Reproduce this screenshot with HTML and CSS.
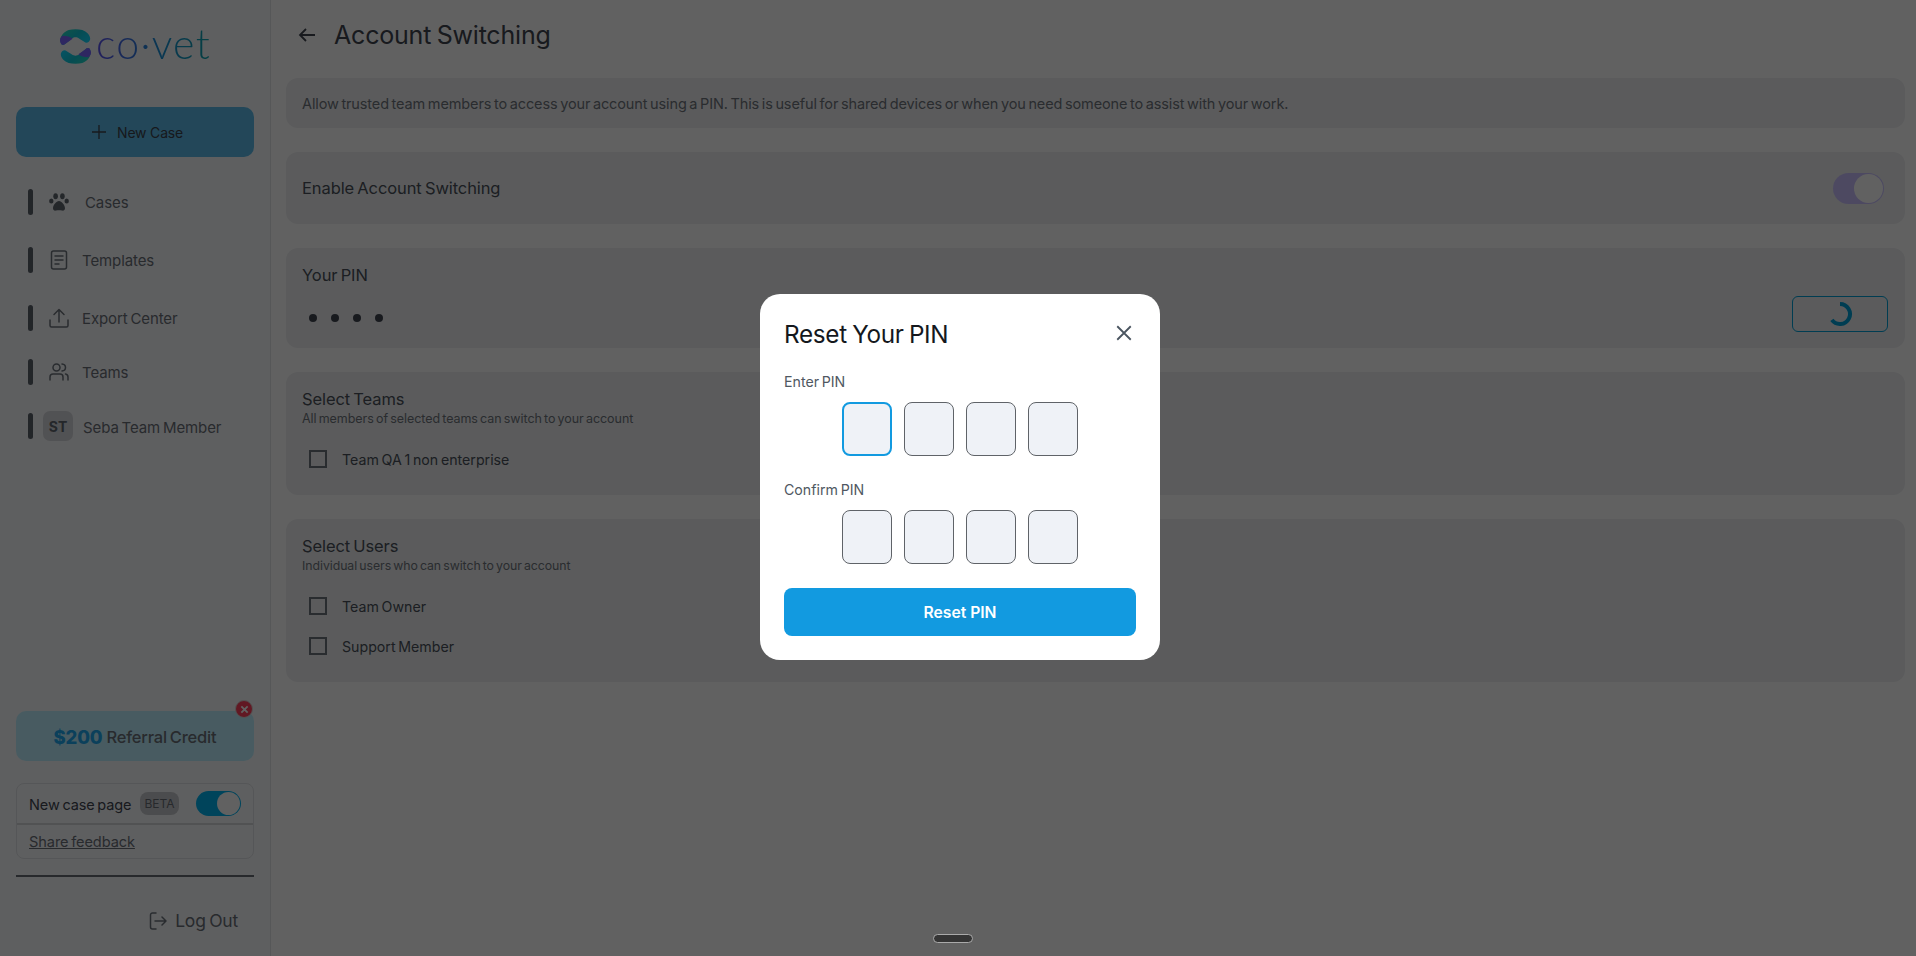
FILE: index.html
```html
<!DOCTYPE html>
<html lang="en">
<head>
    <meta charset="UTF-8">
    <meta name="viewport" content="width=device-width, initial-scale=1.0">
    <title>Account Switching</title>
    <link rel="stylesheet" href="styles.css">
</head>
<body>
    <aside class="sidebar">
        <div class="logo">
            <svg class="logo-mark" viewBox="0 0 32 36">
                <defs>
                    <linearGradient id="logoGrad" x1="0" y1="0" x2="1" y2="0.6">
                        <stop offset="0" stop-color="#2fe0c0"/>
                        <stop offset="0.55" stop-color="#10c8d8"/>
                        <stop offset="1" stop-color="#10d8ff"/>
                    </linearGradient>
                </defs>
                <g>
                    <path fill="url(#logoGrad)" d="M1 15C-1 9 3 3 9 1C13 0 19 0 23 1C28 3 32 7 31 11C30 14 27 15 25 13L20 10C17 8 15 8 12 10L6 15C4 17 2 17 1 15Z"/>
                    <path fill="#7a68ff" d="M1 15C-1 12 0 8 3 7C7 7 11 8 13 10L6 15C4 17 2 17 1 15Z"/>
                </g>
                <g transform="rotate(180 16 18)">
                    <path fill="url(#logoGrad)" d="M1 15C-1 9 3 3 9 1C13 0 19 0 23 1C28 3 32 7 31 11C30 14 27 15 25 13L20 10C17 8 15 8 12 10L6 15C4 17 2 17 1 15Z"/>
                    <path fill="#7a68ff" d="M1 15C-1 12 0 8 3 7C7 7 11 8 13 10L6 15C4 17 2 17 1 15Z"/>
                </g>
            </svg>
            <span class="logo-text">co·vet</span>
        </div>

        <button class="new-case">
            <svg class="icon-plus" viewBox="0 0 16 16"><path d="M8 1v14M1 8h14"/></svg>
            New Case
        </button>

        <nav class="nav">
            <a class="nav-item">
                <span class="nav-bar"></span>
                <svg class="nav-icon" viewBox="0 0 20 18">
                    <g class="solid">
                        <ellipse cx="2.3" cy="8" rx="2.2" ry="2.6"/>
                        <ellipse cx="6.6" cy="3.2" rx="2.3" ry="3"/>
                        <ellipse cx="13.4" cy="3.2" rx="2.3" ry="3"/>
                        <ellipse cx="17.7" cy="8" rx="2.2" ry="2.6"/>
                        <path d="M10 8c-2.6 0-6 4.200-6 7.200C4 17.200 5.400 18 7 17.600c1.900-.5 4.100-.5 6 0 1.600.4 3-.4 3-2.400C16 12.200 12.600 8 10 8z"/>
                    </g>
                </svg>
                <span class="nav-label label-cases">Cases</span>
            </a>
            <a class="nav-item">
                <span class="nav-bar"></span>
                <svg class="nav-icon" viewBox="0 0 20 20">
                    <g class="line">
                        <rect x="2.500" y="1" width="15" height="18" rx="2"/>
                        <path d="M6 6h8M6 10h8M6 14h4"/>
                    </g>
                </svg>
                <span class="nav-label">Templates</span>
            </a>
            <a class="nav-item nav-item-short">
                <span class="nav-bar"></span>
                <svg class="nav-icon" viewBox="0 0 20 20">
                    <g class="line">
                        <path d="M1 12v5.500A1.500 1.500 0 0 0 2.500 19h15a1.500 1.500 0 0 0 1.500-1.500V12"/>
                        <path d="M10 14V1.500M5 6.500l5-5 5 5"/>
                    </g>
                </svg>
                <span class="nav-label">Export Center</span>
            </a>
            <a class="nav-item nav-item-short">
                <span class="nav-bar"></span>
                <svg class="nav-icon" viewBox="0 0 20 18">
                    <g class="line">
                        <circle cx="7.500" cy="4.500" r="3.500"/>
                        <path d="M1 17v-3a3 3 0 0 1 3-3h7a3 3 0 0 1 3 3v3"/>
                        <path d="M13 1c2.500.3 3.500 2 3.500 3.500S15.500 7.700 13 8"/>
                        <path d="M16.500 11c1.500.3 2.500 1.500 2.500 3v3"/>
                    </g>
                </svg>
                <span class="nav-label">Teams</span>
            </a>
            <a class="nav-item nav-item-short">
                <span class="nav-bar"></span>
                <span class="avatar">ST</span>
                <span class="nav-label label-member">Seba Team Member</span>
            </a>
        </nav>

        <div class="sidebar-bottom">
            <div class="referral">
                <span class="referral-amount">$200</span> Referral Credit
                <span class="referral-close">
                    <svg viewBox="0 0 10 10"><path d="M1.500 1.500l7 7M8.500 1.500l-7 7"/></svg>
                </span>
            </div>

            <div class="beta-box">
                <div class="beta-row">
                    <span class="beta-title">New case page</span>
                    <span class="beta-pill">BETA</span>
                    <span class="beta-toggle"><span class="knob"></span></span>
                </div>
                <div class="feedback-row"><a class="feedback">Share feedback</a></div>
            </div>

            <div class="logout">
                <svg class="logout-icon" viewBox="0 0 18 18">
                    <g class="line">
                        <path d="M7 1H3.500A2 2 0 0 0 1.500 3v12a2 2 0 0 0 2 2H7"/>
                        <path d="M6 9h11M13 5l4 4-4 4"/>
                    </g>
                </svg>
                Log Out
            </div>
        </div>
    </aside>

    <main class="content">
        <header class="page-header">
            <svg class="back" viewBox="0 0 18 16"><path d="M17 8H2M8 2L2 8l6 6"/></svg>
            <h1>Account Switching</h1>
        </header>

        <section class="card card-intro">
            Allow trusted team members to access your account using a PIN. This is useful for shared devices or when you need someone to assist with your work.
        </section>

        <section class="card card-enable">
            <span class="card-title">Enable Account Switching</span>
            <span class="switch"><span class="switch-knob"></span></span>
        </section>

        <section class="card card-pin">
            <div>
                <div class="card-title">Your PIN</div>
                <div class="pin-dots"><i></i><i></i><i></i><i></i></div>
            </div>
            <button class="reset-btn">
                <svg class="spinner" viewBox="0 0 26 26"><path d="M13 3a10 10 0 1 1-8.100 15.900"/></svg>
            </button>
        </section>

        <section class="card card-select">
            <div class="card-title">Select Teams</div>
            <div class="card-sub">All members of selected teams can switch to your account</div>
            <label class="check"><span class="box"></span>Team QA 1 non enterprise</label>
        </section>

        <section class="card card-select">
            <div class="card-title">Select Users</div>
            <div class="card-sub card-sub-users">Individual users who can switch to your account</div>
            <label class="check"><span class="box"></span>Team Owner</label>
            <label class="check"><span class="box"></span>Support Member</label>
        </section>
    </main>

    <div class="overlay">
        <div class="modal">
            <div class="modal-head">
                <h2>Reset Your PIN</h2>
                <svg class="modal-close" viewBox="0 0 16 16"><path d="M2 2l12 12M14 2L2 14"/></svg>
            </div>
            <div class="pin-label">Enter PIN</div>
            <div class="pin-row">
                <input class="pin-input pin-focus" type="text">
                <input class="pin-input" type="text">
                <input class="pin-input" type="text">
                <input class="pin-input" type="text">
            </div>
            <div class="pin-label pin-label-second">Confirm PIN</div>
            <div class="pin-row">
                <input class="pin-input" type="text">
                <input class="pin-input" type="text">
                <input class="pin-input" type="text">
                <input class="pin-input" type="text">
            </div>
            <button class="modal-submit">Reset PIN</button>
        </div>
        <div class="handle"></div>
    </div>
</body>
</html>
```

FILE: styles.css
```css
* {
    box-sizing: border-box;
}

body {
    margin: 0;
    height: 100vh;
    display: flex;
    overflow: hidden;
    background: #fff;
    font-family: Inter, 'Noto Sans', sans-serif;
    color: #3d434c;
    word-spacing: -0.08em;
}

/* sidebar */
.sidebar {
    width: 271px;
    flex: none;
    background: #f8fafd;
    border-right: 1px solid #e2e4e8;
    padding: 0 16px;
    display: flex;
    flex-direction: column;
}

.logo {
    height: 107px;
    padding: 29px 0 0 44px;
    display: flex;
    align-items: flex-start;
    gap: 5px;
}

.logo-mark {
    width: 31px;
    height: 35px;
}

.logo-text {
    font-family: Lato, sans-serif;
    font-weight: 300;
    font-size: 41px;
    line-height: 30px;
    letter-spacing: 1.300px;
    background: linear-gradient(to right, #5d52f0, #1a90d8 55%, #0ea8b0);
    -webkit-background-clip: text;
    background-clip: text;
    color: transparent;
}

.new-case {
    height: 50px;
    width: 100%;
    border: none;
    border-radius: 10px;
    background: #5cbcea;
    color: #3d434c;
    font: inherit;
    font-size: 14px;
    letter-spacing: -0.2px;
    display: flex;
    align-items: center;
    justify-content: center;
    gap: 10px;
    padding: 0 0 0 4px;
}

.icon-plus {
    width: 16px;
    height: 16px;
    fill: none;
    stroke: #3d434c;
    stroke-width: 1.300;
}

.nav {
    margin-top: 32px;
    padding-left: 12px;
    display: flex;
    flex-direction: column;
}

.nav-item {
    height: 26px;
    margin-bottom: 32px;
    display: flex;
    align-items: center;
    color: #6a7078;
    font-size: 15px;
    letter-spacing: -0.1px;
}

.nav-item-short {
    margin-bottom: 28px;
}

.nav-bar {
    width: 5px;
    height: 26px;
    border-radius: 3px;
    background: #5a616b;
    flex: none;
}

.nav-icon {
    width: 20px;
    height: 20px;
    margin-left: 16px;
    flex: none;
}

.solid {
    fill: #5f666f;
}

.line {
    fill: none;
    stroke: #6c737c;
    stroke-width: 1.500;
    stroke-linecap: round;
    stroke-linejoin: round;
}

.nav-label {
    margin-left: 13px;
}

.label-cases {
    margin-left: 16px;
}

.avatar {
    width: 30px;
    height: 30px;
    margin-left: 10px;
    border-radius: 7px;
    background: #d6d8dc;
    color: #5f666f;
    font-size: 14px;
    font-weight: 700;
    display: flex;
    align-items: center;
    justify-content: center;
    flex: none;
}

.label-member {
    margin-left: 10px;
    padding-top: 2px;
}

.sidebar-bottom {
    margin-top: auto;
    display: flex;
    flex-direction: column;
}

.referral {
    position: relative;
    height: 50px;
    padding-top: 2px;
    border-radius: 10px;
    background: #bdf0ff;
    color: #6a7078;
    font-size: 16.500px;
    font-weight: 500;
    letter-spacing: -0.2px;
    display: flex;
    align-items: center;
    justify-content: center;
    gap: 4px;
}

.referral-amount {
    color: #1ea8f0;
    font-size: 18.500px;
    font-weight: 800;
}

/* sits over the corner of the referral card */
.referral-close {
    position: absolute;
    right: 1px;
    top: -11px;
    width: 18px;
    height: 18px;
    border-radius: 50%;
    background: #ff3f5c;
    border: 1px solid #d9d9d9;
    display: flex;
    align-items: center;
    justify-content: center;
}

.referral-close svg {
    width: 9px;
    height: 9px;
    fill: none;
    stroke: #fff;
    stroke-width: 2;
}

.beta-box {
    margin-top: 22px;
    height: 76px;
    border: 1px solid #dfe2e6;
    border-radius: 8px;
    display: flex;
    flex-direction: column;
}

.beta-row {
    height: 41px;
    padding: 0 12px;
    border-bottom: 2px solid #d5d7db;
    display: flex;
    align-items: center;
}

.beta-title {
    color: #404550;
    font-size: 14.500px;
    letter-spacing: -0.1px;
    padding-top: 2px;
}

.beta-pill {
    margin-left: 9px;
    padding: 0 4px;
    height: 23px;
    border-radius: 8px;
    background: #c6c8cc;
    color: #666c75;
    font-size: 12px;
    line-height: 23px;
}

.beta-toggle {
    margin-left: auto;
    margin-right: 0;
    width: 45px;
    height: 25px;
    border-radius: 13px;
    background: #00b4f0;
    padding: 1px;
    display: flex;
    justify-content: flex-end;
}

.knob {
    width: 23px;
    height: 23px;
    border-radius: 50%;
    background: #fff;
}

.feedback-row {
    padding: 0 12px;
    flex: 1;
    display: flex;
    align-items: center;
}

.feedback {
    color: #6a7078;
    font-size: 14.600px;
    letter-spacing: -0.1px;
    text-decoration: underline;
}

.logout {
    margin-top: 16px;
    height: 81px;
    border-top: 2px solid #666c75;
    padding: 8px 16px 0 0;
    color: #6a7078;
    font-size: 17.500px;
    letter-spacing: -0.2px;
    display: flex;
    align-items: center;
    justify-content: flex-end;
    gap: 8px;
}

.logout-icon {
    width: 18px;
    height: 18px;
}

/* main */
.content {
    flex: 1;
    padding: 0 11px 0 15px;
    display: flex;
    flex-direction: column;
    gap: 24px;
}

.page-header {
    height: 54px;
    padding: 16px 0 0 12px;
    display: flex;
    align-items: center;
    gap: 18px;
}

.back {
    width: 18px;
    height: 16px;
    fill: none;
    stroke: #404550;
    stroke-width: 1.800;
}

h1 {
    margin: 0;
    font-size: 25px;
    font-weight: 400;
    letter-spacing: -0.2px;
    color: #404550;
}

.card {
    background: #eef0f2;
    border-radius: 12px;
    padding: 0 16px;
    flex: none;
}

.card-intro {
    height: 50px;
    display: flex;
    align-items: center;
    color: #6e747c;
    font-size: 14.500px;
    letter-spacing: -0.12px;
}

.card-enable {
    height: 72px;
    display: flex;
    align-items: center;
    justify-content: space-between;
    padding-right: 21px;
}

.card-title {
    color: #4a505a;
    font-size: 16.500px;
    letter-spacing: -0.1px;
    line-height: 20px;
}

.switch {
    width: 51px;
    height: 31px;
    border-radius: 16px;
    background: #cac1ff;
    padding: 1px;
    display: flex;
    justify-content: flex-end;
}

.switch-knob {
    width: 29px;
    height: 29px;
    border-radius: 50%;
    background: #fff;
}

.card-pin {
    height: 100px;
    padding: 17px 17px 0 16px;
    display: flex;
    justify-content: space-between;
}

.pin-dots {
    margin-top: 29px;
    padding-left: 7px;
    display: flex;
    gap: 14px;
}

.pin-dots i {
    width: 8px;
    height: 8px;
    border-radius: 50%;
    background: #404550;
}

.reset-btn {
    margin-top: 31px;
    width: 96px;
    height: 36px;
    background: none;
    border: 1px solid #00a0d8;
    border-radius: 6px;
    padding: 0;
    display: flex;
    align-items: center;
    justify-content: center;
}

.spinner {
    width: 26px;
    height: 26px;
    fill: none;
    stroke: #00a0d8;
    stroke-width: 4;
}

.card-select {
    padding: 17px 16px 0;
    height: 123px;
}

.card-select + .card-select {
    height: 163px;
}

.card-sub {
    color: #6e747c;
    font-size: 12.500px;
    line-height: 20px;
    letter-spacing: -0.05px;
}

.card-sub-users {
    font-size: 12.300px;
}

.check {
    margin-bottom: 22px;
    margin-top: 21px;
    height: 18px;
    display: flex;
    align-items: center;
    gap: 15px;
    padding-left: 7px;
    color: #4a505a;
    font-size: 14.200px;
}

.check + .check {
    margin-top: 0;
}

.box {
    width: 18px;
    height: 18px;
    border: 2px solid #6c737c;
    flex: none;
}

/* modal */
.overlay {
    position: fixed;
    inset: 0;
    background: rgba(0, 0, 0, 0.62);
    display: flex;
    align-items: center;
    justify-content: center;
    padding: 0 0 2px 4px;
}

.modal {
    width: 400px;
    height: 366px;
    background: #fff;
    border-radius: 20px;
    padding: 24px;
}

.modal-head {
    height: 32px;
    display: flex;
    align-items: center;
    justify-content: space-between;
    padding-right: 3px;
}

h2 {
    margin: 0;
    font-size: 24.300px;
    font-weight: 400;
    letter-spacing: -0.3px;
    color: #14181d;
}

.modal-close {
    width: 18px;
    height: 18px;
    margin-top: -2px;
    fill: none;
    stroke: #4a5560;
    stroke-width: 1.600;
}

.pin-label {
    margin-top: 22px;
    color: #4f5862;
    font-size: 14.200px;
    line-height: 20px;
}

.pin-label-second {
    margin-top: 24px;
}

.pin-row {
    margin-top: 10px;
    display: flex;
    justify-content: center;
    gap: 12px;
}

.pin-input {
    width: 50px;
    height: 54px;
    background: #eff2f7;
    border: 1px solid #5f6368;
    border-radius: 8px;
    padding: 0;
}

.pin-focus {
    border: 2px solid #129ae0;
}

.modal-submit {
    margin-top: 24px;
    width: 100%;
    height: 48px;
    border: none;
    border-radius: 8px;
    background: #129ae0;
    color: #fff;
    font: inherit;
    font-size: 15.700px;
    font-weight: 600;
}

.handle {
    position: absolute;
    left: 933px;
    top: 934px;
    width: 40px;
    height: 9px;
    border-radius: 5px;
    background: #353535;
    border: 1px solid #aaa;
}
```
